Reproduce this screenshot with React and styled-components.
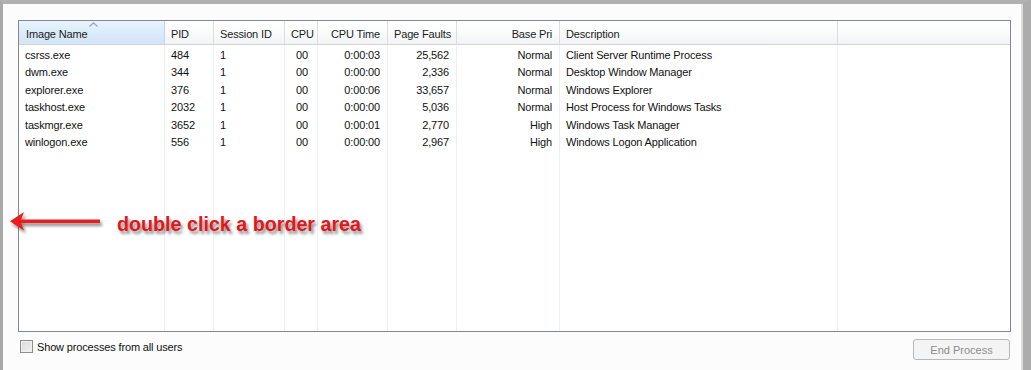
import React from "react";
import styled, { createGlobalStyle } from "styled-components";

const columns = [
  { key: "name", title: "Image Name", width: 146, sorted: true },
  { key: "pid", title: "PID", width: 49 },
  { key: "session", title: "Session ID", width: 71 },
  { key: "cpu", title: "CPU", width: 33, bodyPad: 11 },
  { key: "time", title: "CPU Time", width: 70, right: true },
  { key: "faults", title: "Page Faults", width: 69, right: true },
  { key: "pri", title: "Base Pri", width: 103, right: true },
  { key: "desc", title: "Description", width: 278 },
];

const processes = [
  { name: "csrss.exe", pid: "484", session: "1", cpu: "00", time: "0:00:03", faults: "25,562", pri: "Normal", desc: "Client Server Runtime Process" },
  { name: "dwm.exe", pid: "344", session: "1", cpu: "00", time: "0:00:00", faults: "2,336", pri: "Normal", desc: "Desktop Window Manager" },
  { name: "explorer.exe", pid: "376", session: "1", cpu: "00", time: "0:00:06", faults: "33,657", pri: "Normal", desc: "Windows Explorer" },
  { name: "taskhost.exe", pid: "2032", session: "1", cpu: "00", time: "0:00:00", faults: "5,036", pri: "Normal", desc: "Host Process for Windows Tasks" },
  { name: "taskmgr.exe", pid: "3652", session: "1", cpu: "00", time: "0:00:01", faults: "2,770", pri: "High", desc: "Windows Task Manager" },
  { name: "winlogon.exe", pid: "556", session: "1", cpu: "00", time: "0:00:00", faults: "2,967", pri: "High", desc: "Windows Logon Application" },
];

const GlobalStyle = createGlobalStyle`
  body {
    margin: 0;
    overflow: hidden;
    font-family: "Liberation Sans", Arial, sans-serif;
  }
`;

const App = () => (
  <>
    <GlobalStyle />
    <Window>
      <ListBox>
        {columns.map((col) => (
          <Column key={col.key} $width={col.width}>
            <HeaderCell $sorted={col.sorted} $right={col.right}>
              {col.sorted && (
                <SortArrow width="9" height="5" viewBox="0 0 9 5">
                  <path d="M0.5 4.5 L4.5 0.8 L8.5 4.5" fill="none" stroke="#8fa6bf" strokeWidth="1.2" />
                </SortArrow>
              )}
              {col.title}
            </HeaderCell>
            <ColumnBody>
              {processes.map((p) => (
                <Cell key={p.pid} $right={col.right} $pad={col.bodyPad}>
                  {p[col.key]}
                </Cell>
              ))}
            </ColumnBody>
          </Column>
        ))}
        <FillerColumn>
          <HeaderCell $last />
        </FillerColumn>
      </ListBox>

      <Footer>
        <CheckLabel>
          <CheckBox />
          Show processes from all users
        </CheckLabel>
        <Button disabled>End Process</Button>
      </Footer>

      <Annotation>
        <svg width="100" height="30" viewBox="0 0 100 30">
          <defs>
            <filter id="shade" x="-20%" y="-50%" width="140%" height="200%">
              <feDropShadow dx="2" dy="3" stdDeviation="1.6" floodColor="#000" floodOpacity="0.45" />
            </filter>
          </defs>
          <g filter="url(#shade)">
            <path d="M12 11.5 H92 V15 H12 Z" fill="#ea1a1f" />
            <path d="M2 13.2 L16 4 L12.5 13.2 L16 22.5 Z" fill="#ea1a1f" />
          </g>
        </svg>
        <Note>double click a border area</Note>
      </Annotation>
    </Window>
  </>
);

const Window = styled.div`
  position: relative;
  width: 1031px;
  height: 370px;
  box-sizing: border-box;
  border-top: 4px solid #b1b1b1;
  border-left: 3px solid #a9a9a9;
  border-right: 8px solid #acacac;
  box-shadow: inset -2px 0 0 #dcdcdc;
  background: #fcfcfc;
  padding: 16px 12px 0 15px;
`;

const ListBox = styled.div`
  width: 993px;
  height: 312px;
  box-sizing: border-box;
  border: 1px solid #828790;
  background: #fff;
  display: flex;
`;

const Column = styled.div`
  width: ${(p) => p.$width}px;
  flex-shrink: 0;
  display: flex;
  flex-direction: column;
`;

const FillerColumn = styled.div`
  flex: 1;
  display: flex;
  flex-direction: column;
`;

const HeaderCell = styled.div`
  position: relative;
  height: 24px;
  box-sizing: border-box;
  padding: 7px ${(p) => (p.$right ? 7 : 6)}px 0 ${(p) => (p.$sorted ? 7 : 6)}px;
  border-bottom: 1px solid #d5d5d5;
  border-right: ${(p) => (p.$last ? "none" : p.$sorted ? "1px solid #c3d6e8" : "1px solid #dcdddf")};
  background: ${(p) =>
    p.$sorted
      ? "linear-gradient(#e9f4fd, #d9ebf9 55%, #d3e6f6)"
      : "linear-gradient(#ffffff, #fafbfb 50%, #f2f3f5)"};
  font-size: 11px;
  letter-spacing: -0.15px;
  color: #1b1b1b;
  text-align: ${(p) => (p.$right ? "right" : "left")};
  white-space: nowrap;
`;

const SortArrow = styled.svg`
  position: absolute;
  top: 1px;
  left: 70px;
`;

const ColumnBody = styled.div`
  flex: 1;
  padding-top: 2px;
  border-right: 1px solid #eaf0f7;
`;

const Cell = styled.div`
  height: 17.4px;
  line-height: 17.4px;
  font-size: 11px;
  letter-spacing: -0.15px;
  color: #111;
  white-space: nowrap;
  padding: 0 7px 0 ${(p) => p.$pad ?? 6}px;
  text-align: ${(p) => (p.$right ? "right" : "left")};
`;

const Footer = styled.div`
  display: flex;
  justify-content: space-between;
  align-items: flex-start;
  width: 992px;
  margin-top: 7px;
  padding-left: 2px;
  box-sizing: border-box;
`;

const CheckLabel = styled.label`
  display: flex;
  align-items: center;
  gap: 4px;
  margin-top: 1px;
  font-size: 11px;
  letter-spacing: -0.15px;
  color: #111;
`;

const CheckBox = styled.span`
  width: 11px;
  height: 11px;
  border: 1px solid #8e8f8f;
  background: linear-gradient(135deg, #d9d9d9, #f4f4f4);
  box-shadow: inset 0 0 0 1px #f0f0f0;
`;

const Button = styled.button`
  width: 97px;
  height: 21px;
  border: 1px solid #b5b9bc;
  border-radius: 3px;
  background: #f4f4f4;
  color: #8c8c8c;
  font-family: "Liberation Sans", Arial, sans-serif;
  font-size: 11px;
  padding: 0;
`;

const Annotation = styled.div`
  position: absolute;
  left: 5px;
  top: 204px;
  display: flex;
  align-items: center;
  gap: 9px;
`;

const Note = styled.span`
  font-size: 19.7px;
  font-weight: bold;
  color: #e3161c;
  text-shadow: 2px 3px 3px rgba(0, 0, 0, 0.45);
  margin-top: 2px;
`;

export default App;
